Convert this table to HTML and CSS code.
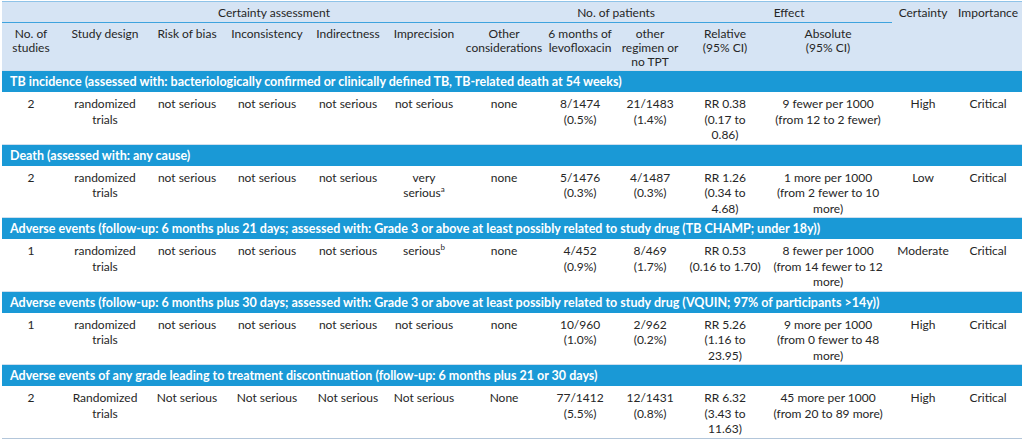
FILE: index.html
```html
<!DOCTYPE html>
<html lang="en">
<head>
<meta charset="utf-8">
<title>GRADE evidence profile</title>
<link rel="stylesheet" href="styles.css">
</head>
<body>
<table class="grade">
  <colgroup>
    <col class="w-studies"><col class="w-design"><col class="w-bias"><col class="w-incons"><col class="w-indir"><col class="w-imprec"><col class="w-other"><col class="w-levo"><col class="w-regimen"><col class="w-rel"><col class="w-abs"><col class="w-cert"><col class="w-imp">
  </colgroup>
  <thead>
    <tr class="group-row">
      <th colspan="7" class="group">Certainty assessment</th>
      <th colspan="2" class="group">No. of patients</th>
      <th colspan="2" class="group">Effect</th>
      <th rowspan="2" class="top">Certainty</th>
      <th rowspan="2" class="top">Importance</th>
    </tr>
    <tr class="sub-row">
      <th>No. of<br>studies</th>
      <th>Study design</th>
      <th>Risk of bias</th>
      <th>Inconsistency</th>
      <th>Indirectness</th>
      <th>Imprecision</th>
      <th>Other<br>considerations</th>
      <th>6 months of<br>levofloxacin</th>
      <th>other<br>regimen or<br>no TPT</th>
      <th>Relative<br>(95% CI)</th>
      <th>Absolute<br>(95% CI)</th>
    </tr>
  </thead>
  <tbody>
    <tr class="section"><td colspan="13">TB incidence (assessed with: bacteriologically confirmed or clinically defined TB, TB-related death at 54 weeks)</td></tr>
    <tr class="data">
      <td>2</td><td>randomized<br>trials</td><td>not serious</td><td>not serious</td><td>not serious</td><td>not serious</td><td>none</td>
      <td>8/1474<br>(0.5%)</td><td>21/1483<br>(1.4%)</td><td>RR 0.38<br>(0.17 to<br>0.86)</td><td>9 fewer per 1000<br>(from 12 to 2 fewer)</td><td>High</td><td>Critical</td>
    </tr>
    <tr class="section"><td colspan="13">Death (assessed with: any cause)</td></tr>
    <tr class="data">
      <td>2</td><td>randomized<br>trials</td><td>not serious</td><td>not serious</td><td>not serious</td><td>very<br>serious<sup>a</sup></td><td>none</td>
      <td>5/1476<br>(0.3%)</td><td>4/1487<br>(0.3%)</td><td>RR 1.26<br>(0.34 to<br>4.68)</td><td>1 more per 1000<br>(from 2 fewer to 10<br>more)</td><td>Low</td><td>Critical</td>
    </tr>
    <tr class="section"><td colspan="13">Adverse events (follow-up: 6 months plus 21 days; assessed with: Grade 3 or above at least possibly related to study drug (TB CHAMP; under 18y))</td></tr>
    <tr class="data">
      <td>1</td><td>randomized<br>trials</td><td>not serious</td><td>not serious</td><td>not serious</td><td>serious<sup>b</sup></td><td>none</td>
      <td>4/452<br>(0.9%)</td><td>8/469<br>(1.7%)</td><td>RR 0.53<br>(0.16 to 1.70)</td><td>8 fewer per 1000<br>(from 14 fewer to 12<br>more)</td><td>Moderate</td><td>Critical</td>
    </tr>
    <tr class="section"><td colspan="13">Adverse events (follow-up: 6 months plus 30 days; assessed with: Grade 3 or above at least possibly related to study drug (VQUIN; 97% of participants &gt;14y))</td></tr>
    <tr class="data">
      <td>1</td><td>randomized<br>trials</td><td>not serious</td><td>not serious</td><td>not serious</td><td>not serious</td><td>none</td>
      <td>10/960<br>(1.0%)</td><td>2/962<br>(0.2%)</td><td>RR 5.26<br>(1.16 to<br>23.95)</td><td>9 more per 1000<br>(from 0 fewer to 48<br>more)</td><td>High</td><td>Critical</td>
    </tr>
    <tr class="section"><td colspan="13">Adverse events of any grade leading to treatment discontinuation (follow-up: 6 months plus 21 or 30 days)</td></tr>
    <tr class="data last">
      <td>2</td><td>Randomized<br>trials</td><td>Not serious</td><td>Not serious</td><td>Not serious</td><td>Not serious</td><td>None</td>
      <td>77/1412<br>(5.5%)</td><td>12/1431<br>(0.8%)</td><td>RR 6.32<br>(3.43 to<br>11.63)</td><td>45 more per 1000<br>(from 20 to 89 more)</td><td>High</td><td>Critical</td>
    </tr>
  </tbody>
</table>
</body>
</html>
```

FILE: styles.css
```css
html, body {
  margin: 0;
  background: #ffffff;
}
body {
  padding: 1px 2px 0 2px;
  font-family: Lato, "Open Sans", "Liberation Sans", sans-serif;
  font-size: 12px;
  color: #262626;
}
.grade {
  width: 1020px;
  table-layout: fixed;
  border-collapse: collapse;
  border-top: 1px solid #8fc3e8;
  border-bottom: 1px solid #b3c6da;
}
.w-studies { width: 58px; }
.w-design { width: 90px; }
.w-bias { width: 74px; }
.w-incons { width: 86px; }
.w-indir { width: 76px; }
.w-imprec { width: 76px; }
.w-other { width: 84px; }
.w-levo { width: 68px; }
.w-regimen { width: 72px; }
.w-rel { width: 78px; }
.w-abs { width: 128px; }
.w-cert { width: 62px; }
.w-imp { width: 68px; }

.grade th {
  background: #d6e4f4;
  font-weight: normal;
  text-align: center;
  vertical-align: top;
  line-height: 14px;
  padding: 0;
  color: #262626;
  white-space: nowrap;
}
.group-row th {
  height: 21px;
  box-sizing: border-box;
  padding-top: 4px;
}
.group-row th.group {
  border-bottom: 1px solid #3ea3de;
}
.sub-row th {
  height: 48px;
  box-sizing: border-box;
  padding-top: 4px;
}
.section td {
  background: #1a99d6;
  color: #ffffff;
  font-weight: bold;
  font-size: 12.5px;
  line-height: 14px;
  padding: 4px 8px 3px 8px;
  border-top: 1px solid #cfdfee;
  white-space: nowrap;
}
.data td {
  text-align: center;
  vertical-align: top;
  line-height: 15.5px;
  padding: 4px 0 1px 0;
  white-space: nowrap;
}
.data sup {
  font-size: 8px;
  line-height: 0;
  vertical-align: 5px;
}
```
